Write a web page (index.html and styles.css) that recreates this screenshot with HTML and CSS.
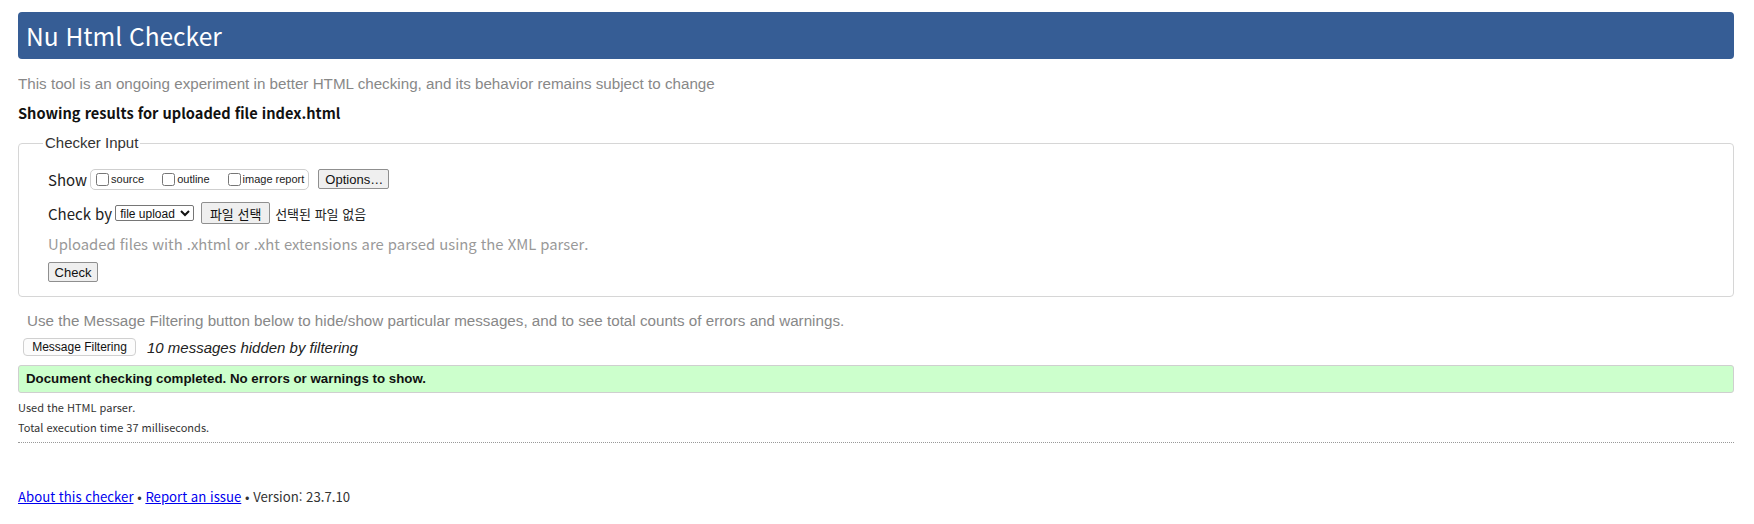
FILE: index.html
```html
<!DOCTYPE html>
<html lang="ko">
<head>
<meta charset="utf-8">
<title>Nu Html Checker</title>
<link rel="stylesheet" href="styles.css">
</head>
<body>
<h1 class="masthead">Nu Html Checker</h1>
<p class="tagline">This tool is an ongoing experiment in better HTML checking, and its behavior remains subject to change</p>
<p class="showing">Showing results for uploaded file index.html</p>
<fieldset class="input-box">
  <legend class="input-legend">Checker Input</legend>
  <div class="row row-show">
    <span class="row-label">Show</span>
    <span class="show-group">
      <label class="opt"><input type="checkbox" class="cb"><span>source</span></label>
      <label class="opt"><input type="checkbox" class="cb"><span>outline</span></label>
      <label class="opt"><input type="checkbox" class="cb"><span>image report</span></label>
    </span>
    <button class="btn btn-options" type="button">Options…</button>
  </div>
  <div class="row row-checkby">
    <span class="row-label">Check by</span>
    <select class="sel"><option>file upload</option></select>
    <button class="btn btn-file" type="button">파일 선택</button>
    <span class="file-none">선택된 파일 없음</span>
  </div>
  <div class="row row-note">Uploaded files with .xhtml or .xht extensions are parsed using the XML parser.</div>
  <div class="row row-submit"><button class="btn btn-check" type="button">Check</button></div>
</fieldset>
<p class="filter-note">Use the Message Filtering button below to hide/show particular messages, and to see total counts of errors and warnings.</p>
<div class="filter-row">
  <button class="btn-filter" type="button">Message Filtering</button>
  <span class="hidden-count">10 messages hidden by filtering</span>
</div>
<div class="success">Document checking completed. No errors or warnings to show.</div>
<p class="stats">Used the HTML parser.</p>
<p class="stats">Total execution time 37 milliseconds.</p>
<div class="rule"></div>
<p class="footer"><a href="#">About this checker</a> • <a href="#">Report an issue</a> • Version: 23.7.10</p>
</body>
</html>
```
FILE: styles.css
```css
html, body {
  background: #fff;
}
body {
  margin: 12px 20px 0 18px;
  font-family: "Noto Sans CJK KR", "Noto Sans", sans-serif;
  color: #222;
}
.masthead {
  margin: 0;
  height: 47px;
  line-height: 47px;
  padding-left: 8px;
  background: #365d95;
  border-radius: 4px;
  color: #fff;
  font-size: 24.5px;
  font-weight: normal;
}
.tagline {
  margin: 16px 0 0;
  font: 15.2px/18px "Liberation Sans", Arial, sans-serif;
  color: #888;
}
.showing {
  margin: 10px 0 0;
  font-size: 14.6px;
  line-height: 20px;
  font-weight: bold;
  color: #111;
}
.input-box {
  margin: 11px 0 0;
  padding: 16px 0 14px 24px;
  border: 1px solid #d6d6d6;
  border-radius: 4px;
}
.input-legend {
  padding: 0 2px;
  font: 15px/18px "Liberation Sans", Arial, sans-serif;
  color: #333;
}
.row {
  display: flex;
  align-items: center;
  height: 22px;
  padding-left: 5px;
}
.row-label {
  font-size: 15px;
  color: #222;
}
.row-checkby {
  margin-top: 12px;
}
.row-note {
  margin-top: 8px;
  font-size: 14.8px;
  color: #999;
}
.row-submit {
  margin-top: 8px;
  height: 20px;
}
.show-group {
  display: flex;
  align-items: center;
  height: 19px;
  margin-left: 3px;
  padding: 0 4px 0 5px;
  border: 1px solid #cfcfcf;
  border-radius: 5px;
}
.opt {
  display: flex;
  align-items: center;
  font: 11px "Liberation Sans", Arial, sans-serif;
  color: #222;
  margin-right: 18px;
}
.opt:last-child {
  margin-right: 0;
}
.cb {
  width: 13px;
  height: 13px;
  margin: 0 2px 0 0;
}
.btn {
  font: 13px "Liberation Sans", Arial, sans-serif;
  color: #111;
  background: #efefef;
  border: 1px solid #8f8f8f;
  border-radius: 2px;
  padding: 0 6px;
}
.btn-options {
  margin-left: 9px;
  height: 20px;
  width: 71px;
}
.sel {
  margin-left: 3px;
  height: 16px;
  width: 79px;
  font: 12px "Liberation Sans", Arial, sans-serif;
  padding: 0;
  border: 1px solid #767676;
  border-radius: 2px;
  background: #fff;
  color: #111;
}
.btn-file {
  margin-left: 7px;
  height: 22px;
  width: 69px;
  font: 13px "Noto Sans CJK KR", sans-serif;
}
.file-none {
  margin-left: 5px;
  font-size: 13px;
  color: #222;
}
.btn-check {
  height: 20px;
  width: 50px;
  padding: 0;
}
.filter-note {
  margin: 15px 0 0;
  padding-left: 9px;
  font: 15.2px/18px "Liberation Sans", Arial, sans-serif;
  color: #888;
}
.filter-row {
  display: flex;
  align-items: center;
  height: 18px;
  margin-top: 8px;
  padding-left: 5px;
}
.btn-filter {
  height: 18px;
  width: 113px;
  padding: 0;
  font: 12px "Liberation Sans", Arial, sans-serif;
  color: #111;
  background: #fcfcfc;
  border: 1px solid #d0d0d0;
  border-radius: 4px;
}
.hidden-count {
  margin-left: 11px;
  font: italic 15px "Liberation Sans", Arial, sans-serif;
  color: #222;
}
.success {
  margin-top: 9px;
  height: 26px;
  padding-left: 7px;
  background: #ccffcc;
  border: 1px solid #cfcfcf;
  border-radius: 3px;
  font: bold 13.3px/26px "Liberation Sans", Arial, sans-serif;
  color: #111;
}
.stats {
  margin: 0;
  font-size: 11px;
  line-height: 20px;
  color: #333;
}
.success + .stats {
  margin-top: 4px;
}
.rule {
  margin-top: 5px;
  border-top: 1px dotted #999;
}
.footer {
  margin: 44px 0 0;
  font-size: 13.2px;
  line-height: 20px;
  color: #333;
}
.footer a {
  color: #0000ee;
}
```
